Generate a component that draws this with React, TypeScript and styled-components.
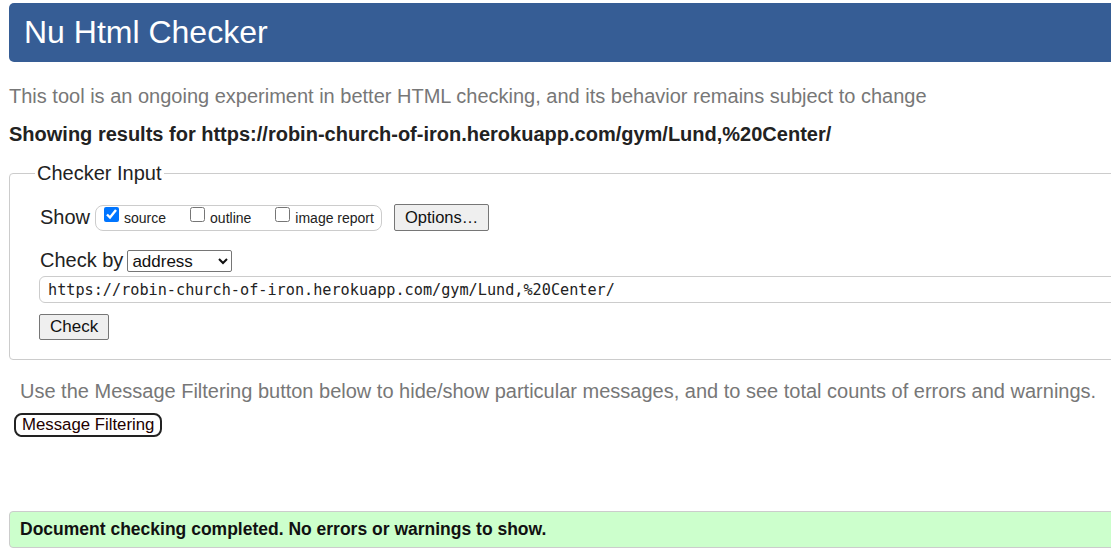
import React from "react";
import styled, { createGlobalStyle } from "styled-components";

const Global = createGlobalStyle`
  html, body { margin: 0; padding: 0; background: #fff; overflow: hidden; }
  body { font-family: "Liberation Sans", Arial, sans-serif; color: #222; }
`;

const Page = styled.div`
  width: 1160px;
  padding: 3px 0 0 9px;
  box-sizing: border-box;
`;

const Header = styled.h1`
  margin: 0;
  height: 59px;
  background: #365d95;
  border-radius: 5px;
  color: #fff;
  font-weight: normal;
  font-size: 32px;
  line-height: 59px;
  padding-left: 15px;
`;

const Intro = styled.p`
  margin: 22px 0 0;
  font-size: 20px;
  line-height: 24px;
  color: #777;
`;

const Showing = styled.p`
  margin: 14px 0 0;
  font-size: 20px;
  font-weight: bold;
  line-height: 24px;
  color: #222;
`;

const Fieldset = styled.fieldset`
  margin: 16px 0 0;
  border: 1px solid #ccc;
  border-radius: 4px;
  padding: 19px 0 19px 30px;
`;

const Legend = styled.legend`
  font-size: 20px;
  padding: 0 2px;
  margin-left: -5px;
  color: #222;
`;

const Row = styled.div<{ $top?: number }>`
  display: flex;
  align-items: center;
  gap: 4px;
  font-size: 20px;
  color: #222;
  margin-top: ${(p) => p.$top ?? 0}px;
`;

const Label = styled.span`
  font-size: 20px;
`;

const Group = styled.div`
  display: flex;
  align-items: center;
  height: 24px;
  border: 1px solid #ccc;
  border-radius: 8px;
  padding: 0 7px 0 8px;
  margin-left: 1px;
  gap: 24px;
`;

const Check = styled.label`
  display: flex;
  align-items: center;
  font-size: 14px;
  color: #222;
  gap: 5px;
  input { margin: 0; width: 15px; height: 15px; position: relative; top: -3px; }
`;

const Button = styled.button<{ $left?: number }>`
  font-family: "Liberation Sans", Arial, sans-serif;
  font-size: 16.5px;
  color: #111;
  background: #efefef;
  border: 1px solid #767676;
  border-radius: 2px;
  height: 27px;
  padding: 0 10px;
  margin-left: ${(p) => p.$left ?? 0}px;
`;

const Select = styled.select`
  font-family: "Liberation Sans", Arial, sans-serif;
  font-size: 17px;
  width: 105px;
  height: 22px;
  border: 1px solid #767676;
  border-radius: 2px;
  background: #fff;
  color: #111;
  margin-left: 0;
`;

const UrlInput = styled.input`
  display: block;
  width: 1120px;
  height: 27px;
  box-sizing: border-box;
  border: 1px solid #ccc;
  border-radius: 6px;
  font-family: "DejaVu Sans Mono", "Liberation Mono", monospace;
  font-size: 15.2px;
  color: #222;
  padding: 0 8px;
  margin: 4px 0 0 -1px;
`;

const CheckButton = styled(Button)`
  display: block;
  margin: 11px 0 0 -1px;
  height: 26px;
  padding: 0 10px;
  font-size: 17px;
`;

const Hint = styled.p`
  margin: 19px 0 0 11px;
  font-size: 20px;
  line-height: 24px;
  color: #777;
`;

const FilterButton = styled.button`
  font-family: "Liberation Sans", Arial, sans-serif;
  font-size: 16.8px;
  color: #200;
  background: #fff;
  border: 2px solid #222;
  border-radius: 8px;
  height: 24px;
  padding: 0 6px;
  margin: 10px 0 0 5px;
  display: block;
`;

const Success = styled.div`
  margin-top: 74px;
  height: 37px;
  box-sizing: border-box;
  background: #ccffcc;
  border: 1px solid #ccc;
  border-radius: 4px;
  font-size: 17.5px;
  font-weight: bold;
  color: #111;
  line-height: 35px;
  padding-left: 10px;
`;

export default function App() {
  return (
    <Page>
      <Global />
      <Header>Nu Html Checker</Header>
      <Intro>This tool is an ongoing experiment in better HTML checking, and its behavior remains subject to change</Intro>
      <Showing>Showing results for https://robin-church-of-iron.herokuapp.com/gym/Lund,%20Center/</Showing>
      <Fieldset>
        <Legend>Checker Input</Legend>
        <Row>
          <Label>Show</Label>
          <Group>
            <Check><input type="checkbox" defaultChecked /> source</Check>
            <Check><input type="checkbox" /> outline</Check>
            <Check><input type="checkbox" /> image report</Check>
          </Group>
          <Button $left={8}>Options…</Button>
        </Row>
        <Row $top={18}>
          <Label>Check by</Label>
          <Select defaultValue="address">
            <option value="address">address</option>
            <option value="upload">file upload</option>
            <option value="text">text input</option>
          </Select>
        </Row>
        <UrlInput defaultValue="https://robin-church-of-iron.herokuapp.com/gym/Lund,%20Center/" />
        <CheckButton>Check</CheckButton>
      </Fieldset>
      <Hint>Use the Message Filtering button below to hide/show particular messages, and to see total counts of errors and warnings.</Hint>
      <FilterButton>Message Filtering</FilterButton>
      <Success>Document checking completed. No errors or warnings to show.</Success>
    </Page>
  );
}
